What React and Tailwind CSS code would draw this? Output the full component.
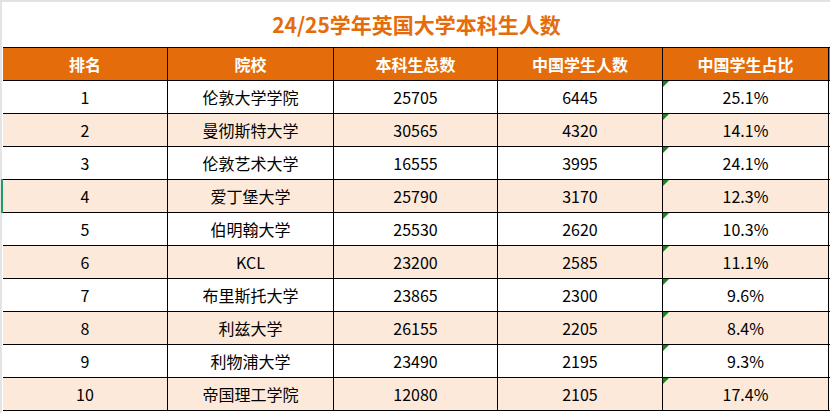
import React from "react";

const rows = [
  ["1", "伦敦大学学院", "25705", "6445", "25.1%"],
  ["2", "曼彻斯特大学", "30565", "4320", "14.1%"],
  ["3", "伦敦艺术大学", "16555", "3995", "24.1%"],
  ["4", "爱丁堡大学", "25790", "3170", "12.3%"],
  ["5", "伯明翰大学", "25530", "2620", "10.3%"],
  ["6", "KCL", "23200", "2585", "11.1%"],
  ["7", "布里斯托大学", "23865", "2300", "9.6%"],
  ["8", "利兹大学", "26155", "2205", "8.4%"],
  ["9", "利物浦大学", "23490", "2195", "9.3%"],
  ["10", "帝国理工学院", "12080", "2105", "17.4%"],
];

const headers = ["排名", "院校", "本科生总数", "中国学生人数", "中国学生占比"];
const widths = ["w-[165px]", "w-[166px]", "w-[164px]", "w-[165px]", "w-[166px]"];

export default function App() {
  return (
    <div
      className="w-[830px] h-[413px] bg-white overflow-hidden flex flex-col"
      style={{ fontFamily: '"Noto Sans CJK SC", "Noto Sans", sans-serif' }}
    >
      <div className="h-[2px] bg-[#e2e2e2] shrink-0" />
      <div className="flex flex-1">
        <div className="w-[3px] shrink-0 flex flex-col">
          <div className="h-[177px] flex">
            <div className="w-[2px] bg-[#e4e4e4]" />
          </div>
          <div className="h-[34px] flex">
            <div className="w-[1px] bg-[#e4e4e4]" />
            <div className="w-[2px] bg-[#1f9d62]" />
          </div>
          <div className="flex-1 flex">
            <div className="w-[2px] bg-[#e4e4e4]" />
          </div>
        </div>
        <div className="flex flex-col">
          <div className="h-[45px] flex items-center justify-center w-[827px]">
            <span className="text-[21px] font-bold text-[#e46c0a] leading-none -mt-[1px]">
              24/25学年英国大学本科生人数
            </span>
          </div>
          <div className="flex border-t border-b border-black bg-[#e46c0a] h-[34px]">
            {headers.map((h, i) => (
              <div
                key={h}
                className={`${widths[i]} h-full border-r border-black flex items-center justify-center text-white font-bold text-[16px] leading-none`}
              >
                {h}
              </div>
            ))}
            <div className="w-[2px] bg-[#e46c0a]" />
          </div>
          {rows.map((r, ri) => (
            <div
              key={ri}
              className={`flex border-b border-black h-[33px] ${ri % 2 === 1 ? "bg-[#fde9d9]" : "bg-white"}`}
            >
              {r.map((c, ci) => (
                <div
                  key={ci}
                  className={`${widths[ci]} h-full border-r border-black flex items-center justify-center text-black text-[16px] leading-none relative`}
                >
                  {ci === 4 && (
                    <svg className="absolute left-0 top-0" width="6" height="6" viewBox="0 0 6 6">
                      <polygon points="0,0 6,0 0,6" fill="#138a13" />
                    </svg>
                  )}
                  {c}
                </div>
              ))}
              <div className="w-[2px] bg-white" />
            </div>
          ))}
        </div>
      </div>
    </div>
  );
}
